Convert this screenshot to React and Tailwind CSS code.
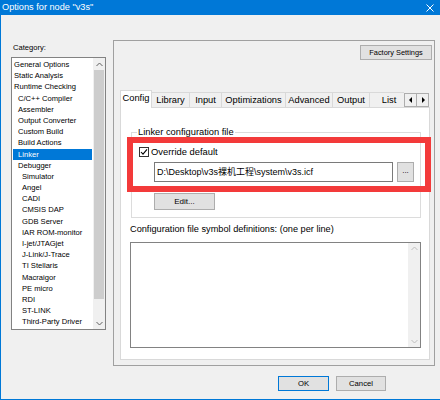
import React from "react";

const items = [
  ["General Options", 0],
  ["Static Analysis", 0],
  ["Runtime Checking", 0],
  ["C/C++ Compiler", 1],
  ["Assembler", 1],
  ["Output Converter", 1],
  ["Custom Build", 1],
  ["Build Actions", 1],
  ["Linker", 1],
  ["Debugger", 1],
  ["Simulator", 2],
  ["Angel", 2],
  ["CADI", 2],
  ["CMSIS DAP", 2],
  ["GDB Server", 2],
  ["IAR ROM-monitor", 2],
  ["I-jet/JTAGjet", 2],
  ["J-Link/J-Trace", 2],
  ["TI Stellaris", 2],
  ["Macraigor", 2],
  ["PE micro", 2],
  ["RDI", 2],
  ["ST-LINK", 2],
  ["Third-Party Driver", 2],
];

const tabs = [
  ["Config", 32],
  ["Library", 39],
  ["Input", 33],
  ["Optimizations", 65],
  ["Advanced", 48],
  ["Output", 38],
  ["List", 40],
];

function Chevron({ up, color = "#606060" }) {
  return (
    <svg width="7" height="5" viewBox="0 0 7 5">
      <path
        d={up ? "M0.5 4 L3.5 1 L6.5 4" : "M0.5 1 L3.5 4 L6.5 1"}
        fill="none"
        stroke={color}
        strokeWidth="1"
      />
    </svg>
  );
}

export default function App() {
  return (
    <div className="w-[440px] h-[400px] bg-[#f0f0f0] border-l border-b border-[#0078d7] flex flex-col overflow-hidden font-['Liberation_Sans','Noto_Sans_CJK_SC',Arial,sans-serif] text-black">
      {/* Title bar */}
      <div className="h-[15px] bg-[#0078d7] flex items-center justify-between pl-[1px] pr-[6px] shrink-0">
        <span className="text-white text-[9.2px] leading-[15px]">Options for node "v3s"</span>
        <svg width="8" height="8" viewBox="0 0 8 8">
          <path d="M0.5 0.5 L7.5 7.5 M7.5 0.5 L0.5 7.5" stroke="#fff" strokeWidth="1" />
        </svg>
      </div>

      {/* Main */}
      <div className="flex items-start pl-[10px] shrink-0">
        {/* Left column */}
        <div className="flex flex-col pt-[28px] w-[95px]">
          <div className="text-[7.6px] leading-[10px] pl-[2px]">Category:</div>
          <div className="mt-[4px] h-[273px] w-[95px] bg-white border border-[#828282] flex">
            <div className="flex-1 flex flex-col pt-[1px] pl-[1px] pr-[1px]">
              {items.map(([label, lvl]) => (
                <div
                  key={label}
                  className={
                    "h-[11.2px] leading-[11.2px] text-[7.6px] whitespace-nowrap " +
                    (lvl === 0 ? "pl-[1px] " : lvl === 1 ? "pl-[5px] " : "pl-[9px] ") +
                    (label === "Linker" ? "bg-[#0078d7] text-white" : "")
                  }
                >
                  {label}
                </div>
              ))}
            </div>
            <div className="w-[12px] bg-[#f0f0f0] flex flex-col items-center">
              <div className="h-[12px] flex items-center justify-center">
                <Chevron up />
              </div>
              <div className="w-[10px] h-[229px] bg-[#cdcdcd]" />
              <div className="flex-1" />
              <div className="h-[12px] flex items-center justify-center">
                <Chevron />
              </div>
            </div>
          </div>
        </div>

        {/* Right panel */}
        <div className="relative ml-[7px] mt-[25px] w-[322px] h-[326px] border border-[#a0a0a0] flex flex-col">
          <div className="flex justify-end pt-[4px] pr-[2px]">
            <div className="w-[72px] h-[15px] bg-[#e1e1e1] border border-[#adadad] text-[7.4px] leading-[13px] text-center">
              Factory Settings
            </div>
          </div>

          {/* Tab strip */}
          <div className="mt-[30px] ml-[6px] w-[310px] h-[18px] -mb-px relative z-10 flex">
            <div className="w-[284px] h-full overflow-hidden flex items-end">
              {tabs.map(([label, w], i) =>
                i === 0 ? (
                  <div
                    key={label}
                    style={{ width: w }}
                    className="h-[18px] shrink-0 bg-white border-t border-l border-r border-[#d9d9d9] text-[9.3px] leading-[15px] text-center"
                  >
                    {label}
                  </div>
                ) : (
                  <div
                    key={label}
                    style={{ width: w }}
                    className="h-[16px] shrink-0 -ml-px bg-[#f0f0f0] border border-[#d9d9d9] text-[9.3px] leading-[14px] text-center"
                  >
                    {label}
                  </div>
                )
              )}
            </div>
            <div className="flex mt-[3px] h-[14px]">
              <div className="w-[13px] h-[14px] bg-[#f0f0f0] border border-[#adadad] flex items-center justify-center">
                <svg width="4" height="6" viewBox="0 0 4 6">
                  <path d="M3 0 L0 3 L3 6 Z" fill="#000" />
                </svg>
              </div>
              <div className="w-[13px] h-[14px] -ml-px bg-[#f0f0f0] border border-[#adadad] flex items-center justify-center">
                <svg width="4" height="6" viewBox="0 0 4 6">
                  <path d="M1 0 L4 3 L1 6 Z" fill="#000" />
                </svg>
              </div>
            </div>
          </div>

          {/* Tab panel */}
          <div className="ml-[6px] w-[310px] h-[253px] bg-white border border-[#d9d9d9] flex flex-col">
            <fieldset className="mt-[19px] ml-[10px] w-[290px] h-[91px] border border-[#dcdcdc] flex flex-col">
              <legend className="ml-[5px] px-[1px] text-[9.3px] leading-[10px]">Linker configuration file</legend>
              <div className="mt-[9px] ml-[7px] h-[12px] flex items-center">
                <div className="w-[10px] h-[10px] border border-[#333] bg-white flex items-center justify-center">
                  <svg width="8" height="8" viewBox="0 0 8 8">
                    <path d="M1 4 L3 6.2 L7 1.3" fill="none" stroke="#000" strokeWidth="1.1" />
                  </svg>
                </div>
                <span className="ml-[2px] text-[9.4px] leading-[12px]">Override default</span>
              </div>
              <div className="mt-[4px] ml-[22px] flex">
                <div className="w-[239px] h-[20px] border border-[#7a7a7a] bg-white pl-[2px] text-[9px] leading-[18px] whitespace-nowrap overflow-hidden">
                  {"D:\\Desktop\\v3s裸机工程\\system\\v3s.icf"}
                </div>
                <div className="ml-[4px] w-[17px] h-[20px] bg-[#e1e1e1] border border-[#adadad] text-[8px] leading-[16px] text-center">
                  ...
                </div>
              </div>
              <div className="mt-[11px] ml-[22px] w-[61px] h-[17px] bg-[#e1e1e1] border border-[#adadad] text-[8px] leading-[15px] text-center">
                Edit...
              </div>
            </fieldset>
            <div className="mt-[6px] ml-[9px] text-[9.2px] leading-[11px] whitespace-nowrap">
              Configuration file symbol definitions: (one per line)
            </div>
            <div className="mt-[7px] ml-[9px] w-[291px] h-[106px] bg-white border border-[#828282] flex justify-end">
              <div className="w-[12px] bg-[#f0f0f0] flex flex-col justify-between items-center py-[3px]">
                <Chevron up color="#bdbdbd" />
                <Chevron color="#bdbdbd" />
              </div>
            </div>
          </div>

          {/* Red annotation rectangle */}
          <div className="absolute left-[13px] top-[96px] w-[304px] h-[55px] border-[6px] border-[#f33a3a] z-20" />
        </div>
      </div>

      {/* Bottom buttons */}
      <div className="flex justify-end pr-[54px] mt-[10px] gap-[7px]">
        <div className="w-[51px] h-[15px] bg-[#e1e1e1] border border-[#0078d7] text-[7.7px] leading-[13px] text-center">OK</div>
        <div className="w-[50px] h-[15px] bg-[#e1e1e1] border border-[#adadad] text-[7.7px] leading-[13px] text-center">Cancel</div>
      </div>
    </div>
  );
}
